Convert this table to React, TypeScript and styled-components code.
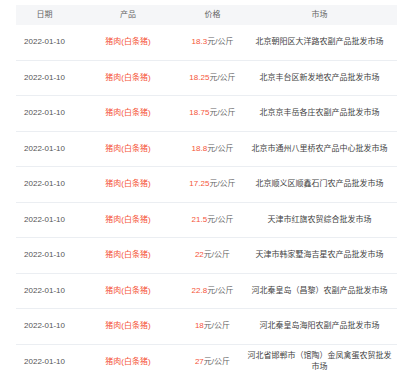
import React from "react";
import styled, { createGlobalStyle } from "styled-components";

const Global = createGlobalStyle`
  html, body { margin: 0; padding: 0; background: #fff; }
  body { font-family: "Liberation Sans", "Noto Sans CJK SC", sans-serif; overflow: hidden; }
`;

const Table = styled.div`
  margin: 5px 0 0 16px;
  font-size: 8px;
  color: #555;
`;

const Row = styled.div<{ $head?: boolean }>`
  display: grid;
  grid-template-columns: 57px 110px 59px 1fr;
  align-items: center;
  text-align: center;
  box-sizing: border-box;
  height: ${(p) => (p.$head ? "20px" : "35.5px")};
  background: ${(p) => (p.$head ? "#f5f6f8" : "#fff")};
  border-bottom: ${(p) => (p.$head ? "none" : "1px solid #ebeef2")};
  color: ${(p) => (p.$head ? "#666" : "#555")};
  line-height: 10.5px;
`;

const Cell = styled.div`
  padding: 0 4px;
  overflow: visible;
`;

const Product = styled(Cell)`
  color: #f5553a;
`;

const Num = styled.span`
  color: #f5553a;
`;

const Unit = styled.span`
  color: #666;
`;

const Market = styled(Cell)`
  color: #444;
`;

const rows: [string, string][] = [
  ["18.3", "北京朝阳区大洋路农副产品批发市场"],
  ["18.25", "北京丰台区新发地农产品批发市场"],
  ["18.75", "北京京丰岳各庄农副产品批发市场"],
  ["18.8", "北京市通州八里桥农产品中心批发市场"],
  ["17.25", "北京顺义区顺鑫石门农产品批发市场"],
  ["21.5", "天津市红旗农贸综合批发市场"],
  ["22", "天津市韩家墅海吉星农产品批发市场"],
  ["22.8", "河北秦皇岛（昌黎）农副产品批发市场"],
  ["18", "河北秦皇岛海阳农副产品批发市场"],
  ["27", "河北省邯郸市（馆陶）金凤禽蛋农贸批发市场"],
];

export default function App() {
  return (
    <>
      <Global />
      <Table>
        <Row $head>
          <Cell>日期</Cell>
          <Cell>产品</Cell>
          <Cell>价格</Cell>
          <Cell>市场</Cell>
        </Row>
        {rows.map(([price, market], i) => (
          <Row key={i}>
            <Cell>2022-01-10</Cell>
            <Product>猪肉(白条猪)</Product>
            <Cell>
              <Num>{price}</Num>
              <Unit>元/公斤</Unit>
            </Cell>
            <Market>{market}</Market>
          </Row>
        ))}
      </Table>
    </>
  );
}
